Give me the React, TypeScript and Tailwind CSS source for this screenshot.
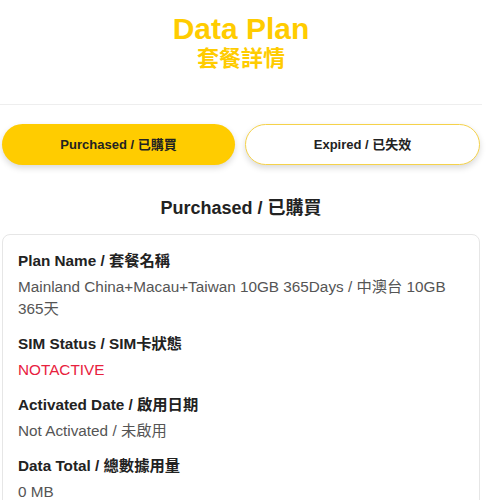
import React from "react";

const font = { fontFamily: '"Liberation Sans", "Noto Sans CJK TC", sans-serif' };

function Item({ label, value, red }: { label: string; value: string; red?: boolean }) {
  return (
    <div className="flex flex-col">
      <div className="text-[15.3px] font-bold leading-[22px] text-[#222]">{label}</div>
      <div className={`mt-[4px] text-[15.3px] leading-[22px] ${red ? "text-[#e8213d]" : "text-[#555]"}`}>{value}</div>
    </div>
  );
}

export default function App() {
  return (
    <div className="min-h-[500px] w-[500px] bg-white" style={font}>
      <div className="w-[482px]">
        <div className="flex flex-col items-center pt-[12px]">
          <div className="text-[30px] font-bold leading-[34px] text-[#ffcc00]">Data Plan</div>
          <div className="text-[22px] font-bold leading-[26px] text-[#ffcc00]">套餐詳情</div>
        </div>
        <div className="mt-[32px] h-px bg-[#eeeeee]" />
        <div className="mt-[19px] flex gap-[10px] px-[2px]">
          <button className="flex h-[41px] flex-1 items-center justify-center rounded-full bg-[#ffcc00] text-[13px] font-bold text-[#222] shadow-[0_3px_6px_rgba(0,0,0,0.15)]">
            Purchased / 已購買
          </button>
          <button className="flex h-[41px] flex-1 items-center justify-center rounded-full border-[1.5px] border-[#f5d24a] bg-white text-[13px] font-bold text-[#222] shadow-[0_3px_6px_rgba(0,0,0,0.15)]">
            Expired / 已失效
          </button>
        </div>
        <div className="mt-[31px] text-center text-[18px] font-bold leading-[24px] text-[#222]">Purchased / 已購買</div>
        <div className="mx-[2px] mt-[14px] rounded-[8px] border border-[#e6e6e6] px-[15px] pb-[16px] pt-[15px]">
          <div className="flex flex-col gap-[13px]">
            <Item label="Plan Name / 套餐名稱" value="Mainland China+Macau+Taiwan 10GB 365Days / 中澳台 10GB 365天" />
            <Item label="SIM Status / SIM卡狀態" value="NOTACTIVE" red />
            <Item label="Activated Date / 啟用日期" value="Not Activated / 未啟用" />
            <Item label="Data Total / 總數據用量" value="0 MB" />
          </div>
        </div>
      </div>
    </div>
  );
}
